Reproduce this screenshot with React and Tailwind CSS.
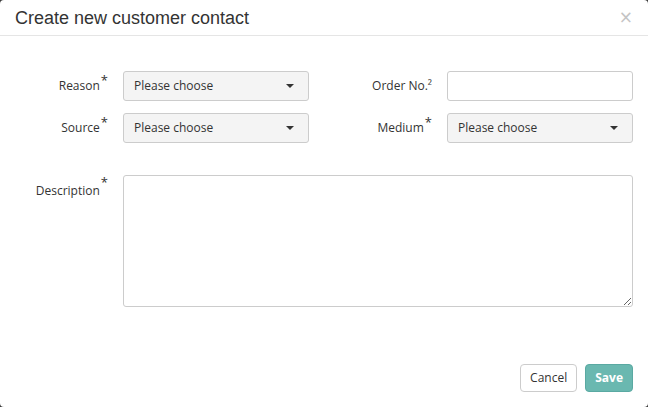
export default function App() {
  const Caret = () => (
    <span className="absolute right-[14px] top-1/2 -translate-y-1/2 w-0 h-0 border-l-[4px] border-r-[4px] border-t-[4px] border-l-transparent border-r-transparent border-t-[#333]" />
  );
  const Select = () => (
    <div className="relative h-[30px] w-[186px] rounded-[3px] border border-[#cccccc] bg-[#f4f4f4] pl-[10px] flex items-center text-[12px] text-[#333]">
      Please choose
      <Caret />
    </div>
  );
  const Label = ({ children, req }) => (
    <div className="flex justify-end items-center pr-[15px] text-[12px] text-[#333]">
      <span>{children}</span>
      {req && <span className="relative -top-[6px] ml-[1px] text-[13px] leading-none">*</span>}
    </div>
  );
  return (
    <div className="w-[648px] h-[407px] bg-[#3a3a3a]" style={{ fontFamily: '"Open Sans", sans-serif' }}>
      <div className="w-full h-full bg-white rounded-[4px] flex flex-col">
        <div className="h-[36px] border-b border-[#e5e5e5] flex items-center justify-between pl-[15px] pr-[15px]">
          <span className="text-[18px] text-[#333] leading-none" style={{ fontFamily: '"Liberation Sans", Arial, sans-serif' }}>
            Create new customer contact
          </span>
          <span className="text-[17px] text-[#c4c4c4] leading-none" style={{ fontFamily: '"DejaVu Sans", sans-serif' }}>×</span>
        </div>
        <div className="flex-1 pt-[35px]">
          <div className="grid grid-cols-[123px_186px_138px_186px] gap-y-[12px]">
            <Label req>Reason</Label>
            <Select />
            <div className="flex justify-end items-center pr-[15px] text-[12px] text-[#333]">Order No.²</div>
            <div className="h-[30px] w-[186px] rounded-[3px] border border-[#cccccc] bg-white" />
            <Label req>Source</Label>
            <Select />
            <Label req>Medium</Label>
            <Select />
          </div>
          <div className="mt-[32px] flex">
            <div className="w-[123px] flex justify-end items-start pr-[15px] pt-[7px] text-[12px] text-[#333]">
              <span>Description</span>
              <span className="relative -top-[6px] ml-[1px] text-[13px] leading-none">*</span>
            </div>
            <textarea className="w-[510px] h-[132px] rounded-[3px] border border-[#cccccc] bg-white resize-y outline-none" />
          </div>
        </div>
        <div className="flex justify-end gap-[8px] pr-[15px] pb-[15px]">
          <button className="h-[28px] px-[9px] rounded-[4px] border border-[#cccccc] bg-white text-[12px] text-[#333]">Cancel</button>
          <button className="h-[28px] px-[9px] rounded-[4px] border border-[#5aa9a2] bg-[#6ab8b0] text-[12px] font-bold text-white">Save</button>
        </div>
      </div>
    </div>
  );
}
